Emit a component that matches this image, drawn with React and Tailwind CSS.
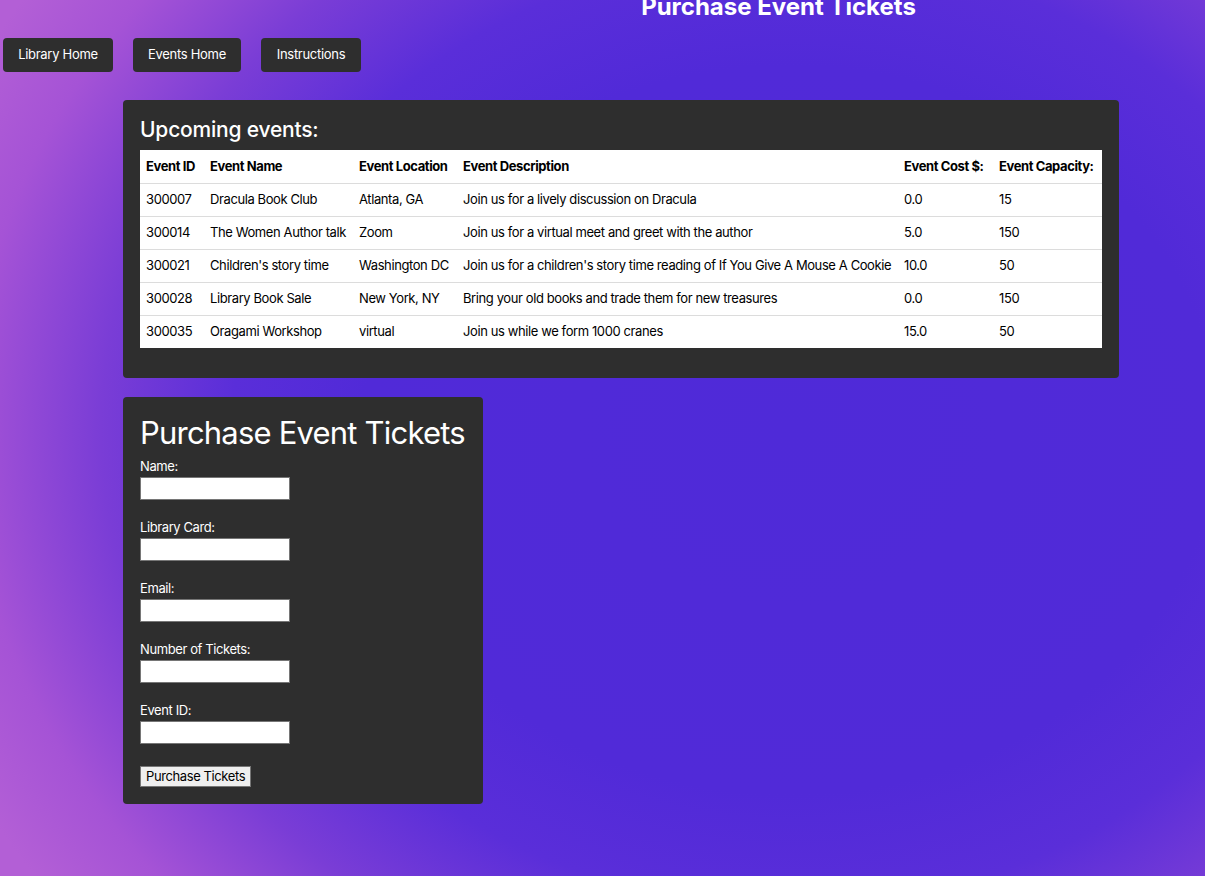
import React from "react";

const events = [
  ["300007", "Dracula Book Club", "Atlanta, GA", "Join us for a lively discussion on Dracula", "0.0", "15"],
  ["300014", "The Women Author talk", "Zoom", "Join us for a virtual meet and greet with the author", "5.0", "150"],
  ["300021", "Children's story time", "Washington DC", "Join us for a children's story time reading of If You Give A Mouse A Cookie", "10.0", "50"],
  ["300028", "Library Book Sale", "New York, NY", "Bring your old books and trade them for new treasures", "0.0", "150"],
  ["300035", "Oragami Workshop", "virtual", "Join us while we form 1000 cranes", "15.0", "50"],
];

const headers = ["Event ID", "Event Name", "Event Location", "Event Description", "Event Cost $:", "Event Capacity:"];

const fields = ["Name:", "Library Card:", "Email:", "Number of Tickets:", "Event ID:"];

export default function App() {
  return (
    <div className="min-h-screen overflow-hidden bg-[radial-gradient(ellipse_820px_700px_at_790px_430px,#4f2ad8_0%,#512ad8_52%,#5a2ed9_68%,#7a3dd6_84%,#a553d6_100%,#b35fd6_112%)] font-['Inter',sans-serif] text-white">
      <h1 className="-mt-[8px] pl-[352px] text-center text-[24px] font-bold leading-[30px]">
        Purchase Event Tickets
      </h1>

      <div className="mt-4 flex gap-5 pl-[3px] tracking-[-0.3px]">
        <button className="h-[34px] w-[110px] rounded bg-[#2e2e2e] text-[13px] text-white">Library Home</button>
        <button className="h-[34px] w-[108px] rounded bg-[#2e2e2e] text-[13px] text-white">Events Home</button>
        <button className="h-[34px] w-[100px] rounded bg-[#2e2e2e] text-[13px] text-white">Instructions</button>
      </div>

      <div className="ml-[123px] mt-[28px] w-[996px] rounded bg-[#2e2e2e] px-[17px] pt-[17px] pb-[30px]">
        <h2 className="mb-[8px] text-[21px] font-medium leading-[25px] tracking-[-0.2px]">Upcoming events:</h2>
        <table className="w-full table-fixed border-collapse bg-white text-[13px] tracking-[-0.4px] text-black">
          <colgroup>
            <col className="w-[64px]" />
            <col className="w-[149px]" />
            <col className="w-[104px]" />
            <col className="w-[441px]" />
            <col className="w-[95px]" />
            <col />
          </colgroup>
          <thead>
            <tr className="h-[33px] border-b border-[#dcdcdc]">
              {headers.map((h) => (
                <th key={h} className="whitespace-nowrap px-[6px] text-left font-bold">
                  {h}
                </th>
              ))}
            </tr>
          </thead>
          <tbody>
            {events.map((row, i) => (
              <tr key={row[0]} className={"h-[33px] " + (i < events.length - 1 ? "border-b border-[#dcdcdc]" : "")}>
                {row.map((c, j) => (
                  <td key={j} className="whitespace-nowrap px-[6px]">
                    {c}
                  </td>
                ))}
              </tr>
            ))}
          </tbody>
        </table>
      </div>

      <div className="ml-[123px] mt-[19px] w-[360px] rounded bg-[#2e2e2e] px-[17px] pt-[17px] pb-[17px]">
        <h2 className="mb-[6px] whitespace-nowrap text-[31px] leading-[38px] tracking-[-0.8px]">Purchase Event Tickets</h2>
        {fields.map((f) => (
          <div key={f} className="mb-[19px] last:mb-[22px]">
            <label className="block text-[13px] leading-4 tracking-[-0.4px]">{f}</label>
            <input className="mt-[3px] block h-[23px] w-[150px] border border-[#767676] bg-white" />
          </div>
        ))}
        <button className="h-[21px] border border-[#767676] bg-[#efefef] px-[5px] text-[13px] leading-[19px] tracking-[-0.4px] text-black">
          Purchase Tickets
        </button>
      </div>
    </div>
  );
}
